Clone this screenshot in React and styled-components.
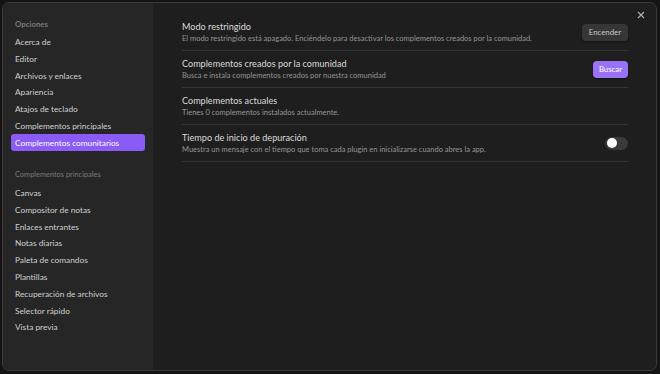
import React from "react";
import styled, { createGlobalStyle } from "styled-components";

const GlobalStyle = createGlobalStyle`
  html, body {
    margin: 0;
    padding: 0;
    background: #141414;
  }
  * {
    box-sizing: border-box;
  }
`;

const optionItems = [
  "Acerca de",
  "Editor",
  "Archivos y enlaces",
  "Apariencia",
  "Atajos de teclado",
  "Complementos principales",
  "Complementos comunitarios",
];

const pluginItems = [
  "Canvas",
  "Compositor de notas",
  "Enlaces entrantes",
  "Notas diarias",
  "Paleta de comandos",
  "Plantillas",
  "Recuperación de archivos",
  "Selector rápido",
  "Vista previa",
];

const settings = [
  {
    title: "Modo restringido",
    desc: "El modo restringido está apagado. Enciéndelo para desactivar los complementos creados por la comunidad.",
    control: "button",
    label: "Encender",
  },
  {
    title: "Complementos creados por la comunidad",
    desc: "Busca e instala complementos creados por nuestra comunidad",
    control: "cta",
    label: "Buscar",
  },
  {
    title: "Complementos actuales",
    desc: "Tienes 0 complementos instalados actualmente.",
    control: null,
  },
  {
    title: "Tiempo de inicio de depuración",
    desc: "Muestra un mensaje con el tiempo que toma cada plugin en inicializarse cuando abres la app.",
    control: "toggle",
  },
];

const Screen = styled.div`
  width: 660px;
  height: 374px;
  padding: 2px 3px 3px 2px;
  font-family: Lato, "Open Sans", sans-serif;
`;

const Modal = styled.div`
  position: relative;
  width: 100%;
  height: 100%;
  display: flex;
  border: 1px solid #3a3a3a;
  border-radius: 7px;
  overflow: hidden;
  background: #1e1e1e;
`;

const Sidebar = styled.nav`
  width: 150px;
  flex-shrink: 0;
  background: #262626;
  padding: 15px 8px 0 8px;
  display: flex;
  flex-direction: column;
`;

const GroupLabel = styled.div`
  height: 12px;
  line-height: 12px;
  padding-left: 4px;
  font-size: ${(p) => (p.$first ? "7.8px" : "7.4px")};
  font-weight: ${(p) => (p.$first ? 700 : 400)};
  color: #7a7a7a;
  margin-top: ${(p) => (p.$first ? "0" : "17.8px")};
  margin-bottom: 3.6px;
`;

const NavItem = styled.div`
  height: 16.8px;
  display: flex;
  align-items: center;
  padding-left: 4px;
  border-radius: 3px;
  font-size: 8.3px;
  color: ${(p) => (p.$active ? "#ffffff" : "#d0d0d0")};
  background: ${(p) => (p.$active ? "#8a5cf5" : "transparent")};
`;

const Content = styled.main`
  flex: 1;
  padding: 11px 28px 0 29px;
`;

const Row = styled.div`
  display: flex;
  align-items: center;
  padding: 6px 0 6px;
  border-bottom: 1px solid #333333;
`;

const Info = styled.div`
  flex: 1;
  display: flex;
  flex-direction: column;
`;

const Title = styled.div`
  font-size: 9.1px;
  line-height: 13px;
  color: #dadada;
`;

const Desc = styled.div`
  font-size: 7.5px;
  line-height: 11px;
  color: #959595;
`;

const Button = styled.div`
  height: 17px;
  padding: 0 ${(p) => (p.$cta ? "6px" : "7px")};
  border-radius: 4px;
  display: flex;
  align-items: center;
  font-size: 7.8px;
  color: ${(p) => (p.$cta ? "#ffffff" : "#c8c8c8")};
  background: ${(p) => (p.$cta ? "#9a73f5" : "#363636")};
  box-shadow: 0 1px 2px rgba(0, 0, 0, 0.4);
`;

const Toggle = styled.div`
  width: 23px;
  height: 13px;
  border-radius: 7px;
  background: #3a3a3a;
  padding: 1.5px;
  display: flex;
  align-items: center;
`;

const Knob = styled.div`
  width: 10px;
  height: 10px;
  border-radius: 50%;
  background: #ffffff;
`;

const Close = styled.div`
  position: absolute;
  top: 6px;
  right: 9px;
  width: 12px;
  height: 12px;
  display: flex;
  align-items: center;
  justify-content: center;
`;

const renderControl = (s) => {
  if (s.control === "button") return <Button>{s.label}</Button>;
  if (s.control === "cta") return <Button $cta>{s.label}</Button>;
  if (s.control === "toggle")
    return (
      <Toggle>
        <Knob />
      </Toggle>
    );
  return null;
};

const App = () => {
  return (
    <>
      <GlobalStyle />
      <Screen>
        <Modal>
          <Sidebar>
            <GroupLabel $first>Opciones</GroupLabel>
            {optionItems.map((item) => (
              <NavItem key={item} $active={item === "Complementos comunitarios"}>
                {item}
              </NavItem>
            ))}
            <GroupLabel>Complementos principales</GroupLabel>
            {pluginItems.map((item) => (
              <NavItem key={item}>{item}</NavItem>
            ))}
          </Sidebar>
          <Content>
            {settings.map((s) => (
              <Row key={s.title}>
                <Info>
                  <Title>{s.title}</Title>
                  <Desc>{s.desc}</Desc>
                </Info>
                {renderControl(s)}
              </Row>
            ))}
          </Content>
          <Close>
            <svg width="8" height="8" viewBox="0 0 8 8">
              <path d="M1 1 L7 7 M7 1 L1 7" stroke="#b0b0b0" strokeWidth="1.1" />
            </svg>
          </Close>
        </Modal>
      </Screen>
    </>
  );
};

export default App;
